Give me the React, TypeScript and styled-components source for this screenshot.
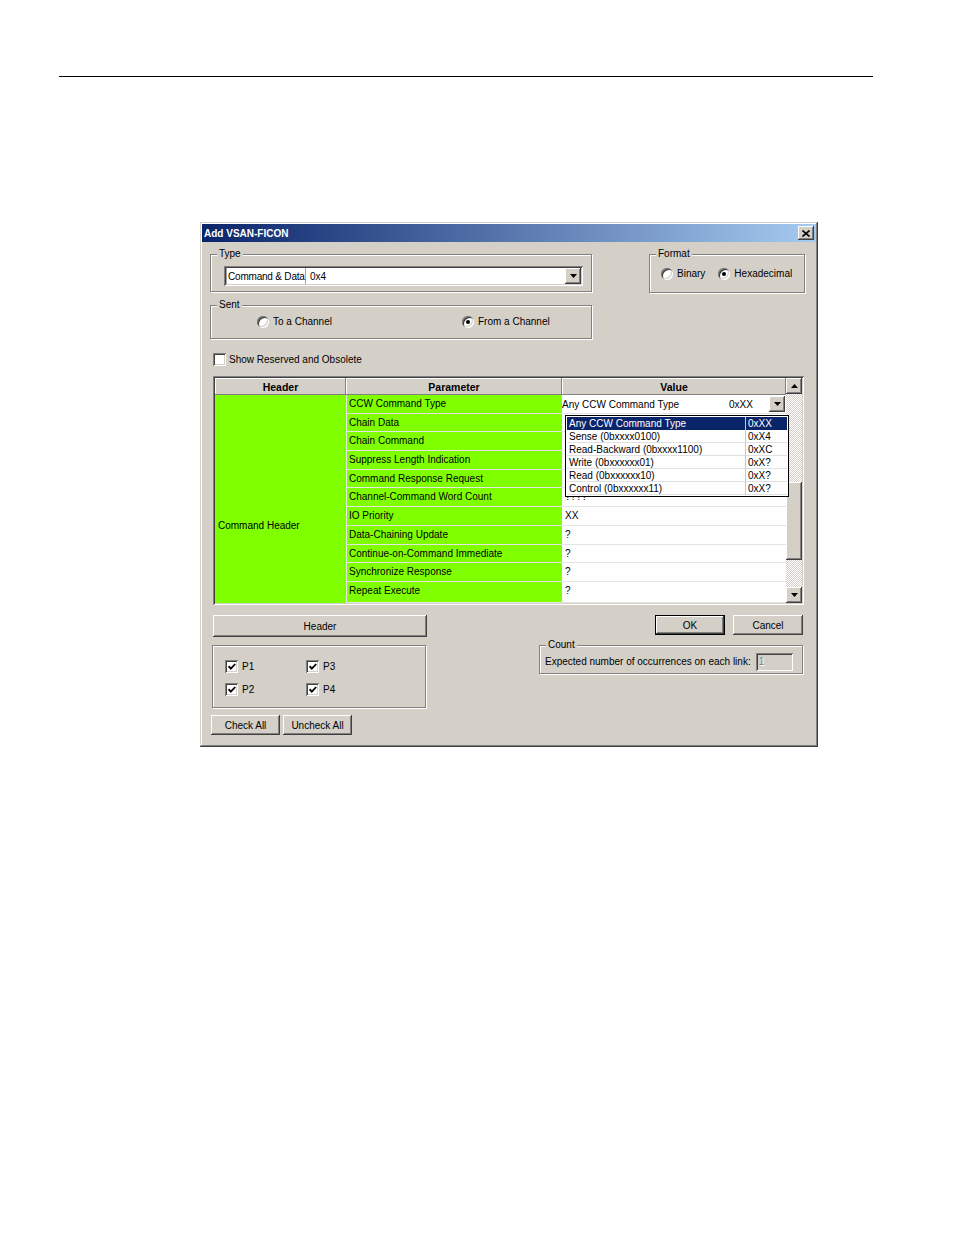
import * as React from 'react';
import styled, { createGlobalStyle, css } from 'styled-components';

const GlobalStyle = createGlobalStyle`
  html, body {
    margin: 0;
    padding: 0;
    background: #fff;
  }
  body {
    font-family: "Liberation Sans", Arial, sans-serif;
    font-size: 10px;
    color: #000;
  }
  * {
    box-sizing: border-box;
  }
`;

const raised = css`
  background: #d4d0c8;
  box-shadow: inset -1px -1px #404040, inset 1px 1px #fff, inset -2px -2px #808080,
    inset 2px 2px #d4d0c8;
`;

const sunken = css`
  box-shadow: inset 1px 1px #808080, inset -1px -1px #fff, inset 2px 2px #404040,
    inset -2px -2px #d4d0c8;
`;

const Page = styled.div`
  width: 954px;
  height: 1235px;
  padding-top: 76px;
  background: #fff;
`;

const Rule = styled.div`
  margin-left: 59px;
  width: 814px;
  height: 1px;
  background: #000;
`;

const Dialog = styled.div`
  margin: 145px 0 0 200px;
  width: 618px;
  height: 525px;
  padding: 2px;
  background: #d4d0c8;
  box-shadow: inset -1px -1px #404040, inset 1px 1px #d4d0c8, inset -2px -2px #808080,
    inset 2px 2px #fff;
  display: flex;
  flex-direction: column;
`;

const TitleBar = styled.div`
  height: 18px;
  display: flex;
  align-items: center;
  justify-content: space-between;
  padding: 0 2px;
  background: linear-gradient(to right, #0a246a, #a6caf0);
  color: #fff;
  font-weight: bold;
  font-size: 10px;
`;

const CloseButton = styled.div`
  ${raised};
  width: 16px;
  height: 14px;
  display: flex;
  align-items: center;
  justify-content: center;
`;

const Body = styled.div`
  flex: 1;
  display: flex;
  flex-direction: column;
`;

const TopRow = styled.div`
  margin-top: 12px;
  padding-left: 8px;
  display: flex;
  align-items: flex-start;
`;

const LeftStack = styled.div`
  display: flex;
  flex-direction: column;
  gap: 13px;
`;

const Group = styled.div<{ $w: number; $h: number }>`
  position: relative;
  width: ${p => p.$w}px;
  height: ${p => p.$h}px;
  border: 1px solid #808080;
  box-shadow: inset 1px 1px #fff, 1px 1px #fff;
`;

const Caption = styled.span`
  position: absolute;
  top: -7px;
  left: 6px;
  padding: 0 2px;
  background: #d4d0c8;
  line-height: 12px;
`;

const TypeGroup = styled(Group)`
  padding: 11px 8px 0 13px;
`;

const SentGroup = styled(Group)`
  padding: 10px 0 0 46px;
  display: grid;
  grid-template-columns: 205px auto;
  align-items: start;
`;

const FormatGroup = styled(Group)`
  margin-left: 57px;
  padding: 13px 0 0 11px;
  display: flex;
  gap: 13px;
  align-items: flex-start;
`;

const Combo = styled.div`
  ${sunken};
  height: 20px;
  padding: 2px;
  background: #fff;
  display: flex;
  align-items: center;
`;

const ComboCell = styled.span<{ $fixed?: boolean }>`
  height: 16px;
  line-height: 17px;
  padding-left: ${p => (p.$fixed ? 1 : 4)}px;
  flex: ${p => (p.$fixed ? '0 0 80px' : '1')};
  border-right: ${p => (p.$fixed ? '1px solid #a0a0a0' : 'none')};
  border-left: ${p => (p.$fixed ? '1px solid #a0a0a0' : 'none')};
  letter-spacing: ${p => (p.$fixed ? '-0.2px' : '0')};
  white-space: nowrap;
  overflow: hidden;
`;

const ArrowButton = styled.span<{ $h?: number }>`
  ${raised};
  flex-shrink: 0;
  width: 16px;
  height: ${p => p.$h ?? 16}px;
  display: flex;
  align-items: center;
  justify-content: center;
`;

const Option = styled.label`
  display: flex;
  align-items: center;
  gap: 4px;
  line-height: 12px;
  white-space: nowrap;
`;

const RadioDot = styled.span<{ $on?: boolean }>`
  position: relative;
  flex-shrink: 0;
  width: 12px;
  height: 12px;
  border-radius: 50%;
  background: #fff;
  box-shadow: inset 1px 1px #808080, inset -1px -1px #fff, inset 2px 2px #404040,
    inset -2px -2px #d4d0c8;
  &::after {
    content: '';
    display: ${p => (p.$on ? 'block' : 'none')};
    position: absolute;
    left: 4px;
    top: 4px;
    width: 4px;
    height: 4px;
    border-radius: 50%;
    background: #000;
  }
`;

const CheckBox = styled.span`
  ${sunken};
  flex-shrink: 0;
  width: 13px;
  height: 13px;
  background: #fff;
  display: flex;
  align-items: center;
  justify-content: center;
`;

const CheckRow = styled.label`
  margin: 14px 0 0 11px;
  height: 13px;
  display: flex;
  align-items: center;
  gap: 3px;
`;

const Table = styled.div`
  ${sunken};
  margin: 10px 0 0 11px;
  width: 591px;
  height: 229px;
  padding: 2px;
  background: #fff;
  display: flex;
`;

const Grid = styled.div`
  position: relative;
  width: 571px;
  display: grid;
  grid-template-columns: 131px 216px 224px;
  grid-template-rows: 17px repeat(10, 18.7px) 1fr;
`;

const HeadCell = styled.div`
  ${raised};
  box-shadow: inset -1px -1px #808080, inset 1px 1px #fff;
  font-weight: bold;
  font-size: 10.5px;
  display: flex;
  align-items: center;
  justify-content: center;
`;

const GroupCell = styled.div`
  grid-column: 1;
  grid-row: 2 / span 11;
  background: #80ff00;
  padding: 124px 0 0 3px;
  line-height: 14px;
`;

const ParamCell = styled.div`
  background: #80ff00;
  border-left: 1px solid #e4e4e4;
  border-bottom: 1px solid #e4e4e4;
  padding: 1px 0 0 2px;
  line-height: 15px;
  white-space: nowrap;
`;

const ValueCell = styled.div<{ $edit?: boolean }>`
  background: #fff;
  border-bottom: 1px solid #e4e4e4;
  padding: ${p => (p.$edit ? '1px 1px 0 0' : '1px 0 0 3px')};
  line-height: 15px;
  white-space: nowrap;
  display: flex;
  align-items: flex-start;
`;

const EditText = styled.span`
  flex: 1;
  padding-top: 1px;
`;

const EditCode = styled.span`
  width: 40px;
  padding-top: 1px;
`;

const DropList = styled.div`
  position: absolute;
  z-index: 2;
  left: 350px;
  top: 37px;
  width: 224px;
  height: 82px;
  padding: 1px;
  border: 1px solid #000;
  background: #fff;
`;

const ListRow = styled.div<{ $sel?: boolean }>`
  height: 13px;
  display: grid;
  grid-template-columns: 178px 1fr;
  line-height: 13px;
  background: ${p => (p.$sel ? '#0a246a' : '#fff')};
  color: ${p => (p.$sel ? '#fff' : '#000')};
  border-bottom: 1px solid ${p => (p.$sel ? '#0a246a' : '#e0e0e0')};
  white-space: nowrap;
`;

const ListName = styled.span`
  padding-left: 2px;
`;

const ListCode = styled.span`
  padding-left: 2px;
  border-left: 1px solid #c8c8c8;
`;

const ScrollBar = styled.div`
  width: 16px;
  display: flex;
  flex-direction: column;
`;

const Track = styled.div<{ $h?: number }>`
  height: ${p => (p.$h ? `${p.$h}px` : 'auto')};
  flex: ${p => (p.$h ? '0 0 auto' : '1')};
  background-color: #fff;
  background-image: conic-gradient(#d4d0c8 25%, #fff 0 50%, #d4d0c8 0 75%, #fff 0);
  background-size: 2px 2px;
`;

const Thumb = styled.div`
  ${raised};
  height: 78px;
`;

const BottomRow = styled.div`
  margin-top: 10px;
  padding-left: 10px;
  display: flex;
  align-items: flex-start;
`;

const BottomLeft = styled.div`
  width: 215px;
  display: flex;
  flex-direction: column;
`;

const BottomRight = styled.div`
  margin-left: 112px;
  width: 264px;
  display: flex;
  flex-direction: column;
`;

const Button = styled.button<{ $w: number; $h?: number; $default?: boolean }>`
  ${raised};
  width: ${p => p.$w}px;
  height: ${p => p.$h ?? 20}px;
  border: ${p => (p.$default ? '1px solid #000' : 'none')};
  padding: 0;
  font: inherit;
  color: #000;
  display: flex;
  align-items: center;
  justify-content: center;
`;

const HeaderButton = styled(Button)`
  margin-left: 1px;
`;

const PGroup = styled(Group)`
  margin-top: 8px;
  padding: 14px 0 0 12px;
  display: grid;
  grid-template-columns: 81px auto;
  grid-auto-rows: 13px;
  row-gap: 10px;
`;

const PItem = styled.label`
  display: flex;
  align-items: center;
  gap: 4px;
`;

const CheckButtons = styled.div`
  margin: 7px 0 0 -1px;
  display: flex;
  gap: 3px;
`;

const DialogButtons = styled.div`
  display: flex;
  justify-content: flex-end;
  gap: 8px;
`;

const CountGroup = styled(Group)`
  margin-top: 10px;
  padding: 4px 0 0 5px;
  display: flex;
  align-items: center;
  gap: 5px;
  white-space: nowrap;
`;

const CountInput = styled.span`
  ${sunken};
  width: 37px;
  height: 18px;
  padding-left: 3px;
  line-height: 18px;
  color: #808080;
  text-shadow: 1px 1px #fff;
`;

const ArrowDown = () => (
  <svg width="7" height="4" viewBox="0 0 7 4">
    <path d="M0 0h7L3.5 4z" fill="#000" />
  </svg>
);

const ArrowUp = () => (
  <svg width="7" height="4" viewBox="0 0 7 4">
    <path d="M0 4h7L3.5 0z" fill="#000" />
  </svg>
);

const Tick = () => (
  <svg width="8" height="7" viewBox="0 0 8 7">
    <path d="M0.6 3.2L2.8 5.6L7.2 1" fill="none" stroke="#000" strokeWidth="1.8" />
  </svg>
);

const rows: [string, string][] = [
  ['CCW Command Type', ''],
  ['Chain Data', '?'],
  ['Chain Command', '?'],
  ['Suppress Length Indication', '?'],
  ['Command Response Request', '?'],
  ['Channel-Command Word Count', '????'],
  ['IO Priority', 'XX'],
  ['Data-Chaining Update', '?'],
  ['Continue-on-Command Immediate', '?'],
  ['Synchronize Response', '?'],
  ['Repeat Execute', '?'],
];

const commandTypes: [string, string][] = [
  ['Any CCW Command Type', '0xXX'],
  ['Sense (0bxxxx0100)', '0xX4'],
  ['Read-Backward (0bxxxx1100)', '0xXC'],
  ['Write (0bxxxxxx01)', '0xX?'],
  ['Read (0bxxxxxx10)', '0xX?'],
  ['Control (0bxxxxxx11)', '0xX?'],
];

export default function App(): React.ReactElement {
  return (
    <Page>
      <GlobalStyle />
      <Rule />
      <Dialog>
        <TitleBar>
          <span>Add VSAN-FICON</span>
          <CloseButton>
            <svg width="8" height="7" viewBox="0 0 8 7">
              <path d="M0.5 0.5L7.5 6.5M7.5 0.5L0.5 6.5" stroke="#000" strokeWidth="1.6" />
            </svg>
          </CloseButton>
        </TitleBar>
        <Body>
          <TopRow>
            <LeftStack>
              <TypeGroup $w={382} $h={38}>
                <Caption>Type</Caption>
                <Combo>
                  <ComboCell $fixed>Command &amp; Data</ComboCell>
                  <ComboCell>0x4</ComboCell>
                  <ArrowButton>
                    <ArrowDown />
                  </ArrowButton>
                </Combo>
              </TypeGroup>
              <SentGroup $w={382} $h={34}>
                <Caption>Sent</Caption>
                <Option>
                  <RadioDot />
                  To a Channel
                </Option>
                <Option>
                  <RadioDot $on />
                  From a Channel
                </Option>
              </SentGroup>
            </LeftStack>
            <FormatGroup $w={156} $h={39}>
              <Caption>Format</Caption>
              <Option>
                <RadioDot />
                Binary
              </Option>
              <Option>
                <RadioDot $on />
                Hexadecimal
              </Option>
            </FormatGroup>
          </TopRow>

          <CheckRow>
            <CheckBox />
            Show Reserved and Obsolete
          </CheckRow>

          <Table>
            <Grid>
              <HeadCell>Header</HeadCell>
              <HeadCell>Parameter</HeadCell>
              <HeadCell>Value</HeadCell>
              <GroupCell>Command Header</GroupCell>
              {rows.map(([name, value], i) => (
                <React.Fragment key={name}>
                  <ParamCell>{name}</ParamCell>
                  {i === 0 ? (
                    <ValueCell $edit>
                      <EditText>Any CCW Command Type</EditText>
                      <EditCode>0xXX</EditCode>
                      <ArrowButton>
                        <ArrowDown />
                      </ArrowButton>
                    </ValueCell>
                  ) : (
                    <ValueCell>{value}</ValueCell>
                  )}
                </React.Fragment>
              ))}
              <DropList>
                {commandTypes.map(([name, code], i) => (
                  <ListRow key={name} $sel={i === 0}>
                    <ListName>{name}</ListName>
                    <ListCode>{code}</ListCode>
                  </ListRow>
                ))}
              </DropList>
            </Grid>
            <ScrollBar>
              <ArrowButton>
                <ArrowUp />
              </ArrowButton>
              <Track $h={88} />
              <Thumb />
              <Track />
              <ArrowButton>
                <ArrowDown />
              </ArrowButton>
            </ScrollBar>
          </Table>

          <BottomRow>
            <BottomLeft>
              <HeaderButton $w={214} $h={22}>
                Header
              </HeaderButton>
              <PGroup $w={214} $h={63}>
                {['P1', 'P3', 'P2', 'P4'].map(p => (
                  <PItem key={p}>
                    <CheckBox>
                      <Tick />
                    </CheckBox>
                    {p}
                  </PItem>
                ))}
              </PGroup>
              <CheckButtons>
                <Button $w={69}>Check All</Button>
                <Button $w={69}>Uncheck All</Button>
              </CheckButtons>
            </BottomLeft>
            <BottomRight>
              <DialogButtons>
                <Button $w={70} $default>
                  OK
                </Button>
                <Button $w={70}>Cancel</Button>
              </DialogButtons>
              <CountGroup $w={264} $h={29}>
                <Caption>Count</Caption>
                Expected number of occurrences on each link:
                <CountInput>1</CountInput>
              </CountGroup>
            </BottomRight>
          </BottomRow>
        </Body>
      </Dialog>
    </Page>
  );
}
